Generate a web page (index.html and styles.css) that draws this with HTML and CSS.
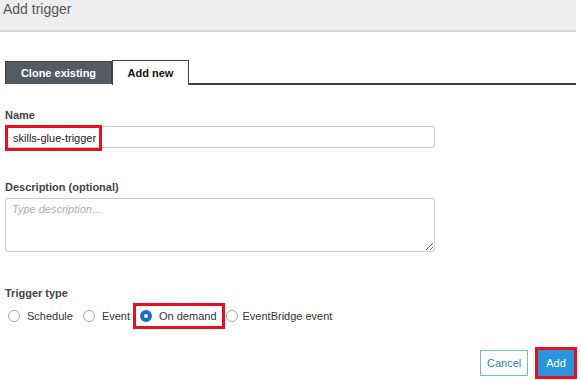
FILE: index.html
```html
<!DOCTYPE html>
<html lang="en">
  <head>
    <meta charset="UTF-8" />
    <title>Add trigger</title>
    <link rel="stylesheet" href="styles.css">
  </head>
  <body>
    <div class="panel">
      <div class="header">Add trigger</div>

      <div class="tabs">
        <div class="tab tabDark">Clone existing</div>
        <div class="tab tabActive">Add new</div>
        <div class="tabLine"></div>
      </div>

      <form class="form">
        <label class="field">
          <span class="fieldLabel">Name</span>
          <div class="inputBox">
            <span class="highlight nameHighlight">skills-glue-trigger</span>
          </div>
        </label>

        <label class="field descField">
          <span class="fieldLabel">Description (optional)</span>
          <textarea class="textBox" placeholder="Type description..."></textarea>
        </label>

        <div class="field typeField">
          <span class="fieldLabel">Trigger type</span>
          <div class="radios">
            <span class="radioItem"><span class="radio"></span>Schedule</span>
            <span class="radioItem"><span class="radio"></span>Event</span>
            <span class="radioItem highlight demand"><span class="radio checked"></span>On demand</span>
            <span class="radioItem bridge"><span class="radio"></span>EventBridge event</span>
          </div>
        </div>

        <div class="actions">
          <button type="button" class="btn btnCancel">Cancel</button>
          <span class="highlight addWrap"><button type="button" class="btn btnAdd">Add</button></span>
        </div>
      </form>
    </div>
  </body>
</html>
```

FILE: styles.css
```css
body {
  margin: 0;
  font-family: "Liberation Sans", Arial, sans-serif;
  background: #fff;
  color: #333;
}

.panel {
  width: 576px;
}

.header {
  background: #eeeeee;
  height: 30px;
  border-bottom: 2px solid #d8d8d8;
  color: #555;
  font-size: 14px;
  padding-left: 3px;
  line-height: 18px;
}

.tabs {
  display: flex;
  align-items: flex-end;
  margin-top: 28px;
  padding-left: 5px;
}
.tab {
  height: 24px;
  box-sizing: border-box;
  font-size: 11px;
  font-weight: bold;
  display: flex;
  align-items: center;
  justify-content: center;
}
.tabDark {
  width: 107px;
  background: #545b64;
  color: #fff;
  border: 1px solid #3c3f44;
  border-bottom: none;
  height: 23px;
  margin-bottom: 1px;
}
.tabActive {
  width: 77px;
  background: #fff;
  color: #111;
  border: 1px solid #444;
  border-bottom: none;
  height: 25px;
}
.tabLine {
  flex: 1;
  border-bottom: 2px solid #444;
}

.form {
  padding: 0 5px;
}

.field {
  display: block;
}
.fieldLabel {
  display: block;
  font-size: 11px;
  font-weight: bold;
  color: #444;
  margin-top: 24px;
  margin-bottom: 5px;
}

.inputBox {
  width: 430px;
  height: 22px;
  box-sizing: border-box;
  border: 1px solid #ccc;
  border-radius: 3px;
  display: flex;
  align-items: center;
  position: relative;
}
.highlight {
  border: 3px solid #e8101f;
  box-sizing: border-box;
}
.nameHighlight {
  position: absolute;
  left: -1px;
  top: -2px;
  height: 26px;
  width: 97px;
  font-size: 11px;
  color: #222;
  display: flex;
  align-items: center;
  padding-left: 5px;
}

.descField .fieldLabel {
  margin-top: 33px;
}
.textBox {
  display: block;
  width: 430px;
  height: 54px;
  box-sizing: border-box;
  border: 1px solid #ccc;
  border-radius: 3px;
  padding: 4px 6px;
  font-family: "Liberation Sans", Arial, sans-serif;
  font-size: 11px;
  resize: vertical;
}
.textBox::placeholder {
  color: #aab0b6;
  font-style: italic;
}

.typeField .fieldLabel {
  margin-top: 35px;
  margin-bottom: 4px;
}
.radios {
  display: flex;
  align-items: center;
  font-size: 11px;
  color: #333;
}
.radioItem {
  display: flex;
  align-items: center;
  gap: 7px;
  height: 26px;
  margin-right: 10px;
}
.radioItem:first-child {
  margin-left: 3px;
}
.radio {
  width: 12px;
  height: 12px;
  box-sizing: border-box;
  border: 1px solid #aaa;
  border-radius: 50%;
  background: #fff;
}
.radio.checked {
  border: 4px solid #1a6fc2;
}
.demand {
  margin-left: -7px;
  padding: 0 5px 0 4px;
  margin-right: 1px;
}
.bridge {
  gap: 5px;
}

.actions {
  display: flex;
  justify-content: flex-end;
  align-items: center;
  margin-top: 18px;
  margin-right: -6px;
  gap: 7px;
}
.btn {
  font-family: "Liberation Sans", Arial, sans-serif;
  font-size: 11px;
  height: 26px;
  box-sizing: border-box;
  cursor: pointer;
}
.btnCancel {
  width: 48px;
  background: #fff;
  border: 1px solid #79b6e3;
  color: #2b7fc4;
}
.addWrap {
  display: flex;
  padding: 0;
}
.btnAdd {
  width: 36px;
  height: 26px;
  background: #2b95dc;
  color: #fff;
  border: none;
  margin: 0;
}
```
